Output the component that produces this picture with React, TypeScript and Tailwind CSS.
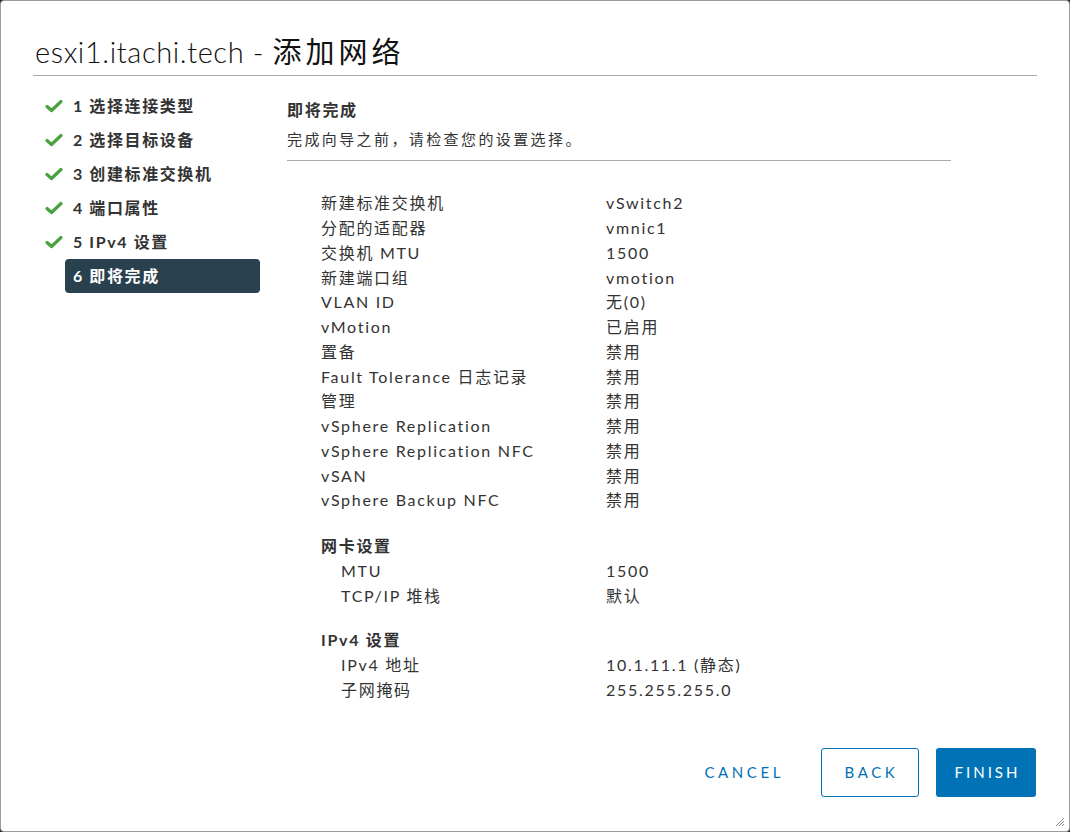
import React from "react";

const steps = [
  "1 选择连接类型",
  "2 选择目标设备",
  "3 创建标准交换机",
  "4 端口属性",
  "5 IPv4 设置",
  "6 即将完成",
];

const rows: [string, string][] = [
  ["新建标准交换机", "vSwitch2"],
  ["分配的适配器", "vmnic1"],
  ["交换机 MTU", "1500"],
  ["新建端口组", "vmotion"],
  ["VLAN ID", "无(0)"],
  ["vMotion", "已启用"],
  ["置备", "禁用"],
  ["Fault Tolerance 日志记录", "禁用"],
  ["管理", "禁用"],
  ["vSphere Replication", "禁用"],
  ["vSphere Replication NFC", "禁用"],
  ["vSAN", "禁用"],
  ["vSphere Backup NFC", "禁用"],
];

const font = { fontFamily: '"Lato", "Noto Sans CJK SC", sans-serif' };

function Check() {
  return (
    <svg width="18" height="14" viewBox="0 0 18 14">
      <path d="M2 7.5 L6.5 11.5 L16 2.5" fill="none" stroke="#48a23f" strokeWidth="3.2" strokeLinecap="round" strokeLinejoin="round" />
    </svg>
  );
}

function Row({ label, value, indent }: { label: string; value: string; indent?: boolean }) {
  return (
    <div className="flex h-[24.75px] items-center">
      <div className={`w-[285px] ${indent ? "pl-[20px]" : ""}`}>{label}</div>
      <div>{value}</div>
    </div>
  );
}

export default function App() {
  return (
    <div className="h-[832px] w-[1070px] bg-[#1d2b33]" style={font}>
      <div className="flex h-full flex-col rounded-[4px] border border-[#9b9b9b] bg-white text-[#333]">
        <div className="px-[32px] pt-[31px]">
          <h1 className="border-b border-[#ababab] pb-[3px] pl-[2px] text-[29px] font-light leading-[40px] tracking-[0.6px] text-[#111]">
            esxi1.itachi.tech - <span className="font-normal tracking-[4px]">添加网络</span>
          </h1>
        </div>

        <div className="flex flex-1">
          <nav className="w-[259px] shrink-0 pl-[32px] pt-[13px]">
            {steps.map((s, i) => {
              const active = i === steps.length - 1;
              return (
                <div key={s} className="flex h-[34px] items-center">
                  <div className="flex w-[32px] justify-center pl-[9px]">{!active && <Check />}</div>
                  <div
                    className={`flex h-[34px] w-[195px] items-center rounded-[4px] px-[8px] text-[16px] font-bold tracking-[1.6px] ${
                      active ? "bg-[#29414e] text-white" : "text-[#333]"
                    }`}
                  >
                    {s}
                  </div>
                </div>
              );
            })}
          </nav>

          <main className="flex-1 pl-[27px] pt-[22px]">
            <div className="w-[664px]">
              <div className="text-[16px] font-bold leading-[24px] tracking-[1.7px]">即将完成</div>
              <div className="mt-[6px] border-b border-[#ababab] pb-[10px] text-[15px] leading-[22px] tracking-[2.4px]">
                完成向导之前，请检查您的设置选择。
              </div>
            </div>

            <div className="pl-[34px] pt-[30px] text-[16px] tracking-[1.7px]">
              {rows.map(([l, v]) => (
                <Row key={l} label={l} value={v} />
              ))}

              <div className="mt-[21px] flex h-[24.75px] items-center font-bold">网卡设置</div>
              <Row label="MTU" value="1500" indent />
              <Row label="TCP/IP 堆栈" value="默认" indent />

              <div className="mt-[20px] flex h-[24.75px] items-center font-bold">IPv4 设置</div>
              <Row label="IPv4 地址" value="10.1.11.1 (静态)" indent />
              <Row label="子网掩码" value="255.255.255.0" indent />
            </div>
          </main>
        </div>

        <div className="relative flex items-center justify-end gap-[17px] px-[33px] pb-[34px]">
          <button className="mr-[20px] h-[49px] pl-[4px] text-[15px] tracking-[3.6px] text-[#0072b5]">CANCEL</button>
          <button className="h-[49px] w-[98px] rounded-[3px] border border-[#0072b5] pl-[3px] text-[15px] tracking-[3.6px] text-[#0072b5]">
            BACK
          </button>
          <button className="h-[49px] w-[100px] rounded-[3px] bg-[#0072b5] pl-[3px] text-[15px] tracking-[3px] text-white">
            FINISH
          </button>
          <svg className="absolute bottom-[4px] right-[4px]" width="12" height="12" viewBox="0 0 12 12">
            <path d="M11 3 L3 11 M11 6 L6 11 M11 9 L9 11" stroke="#888" strokeWidth="1" />
          </svg>
        </div>
      </div>
    </div>
  );
}
